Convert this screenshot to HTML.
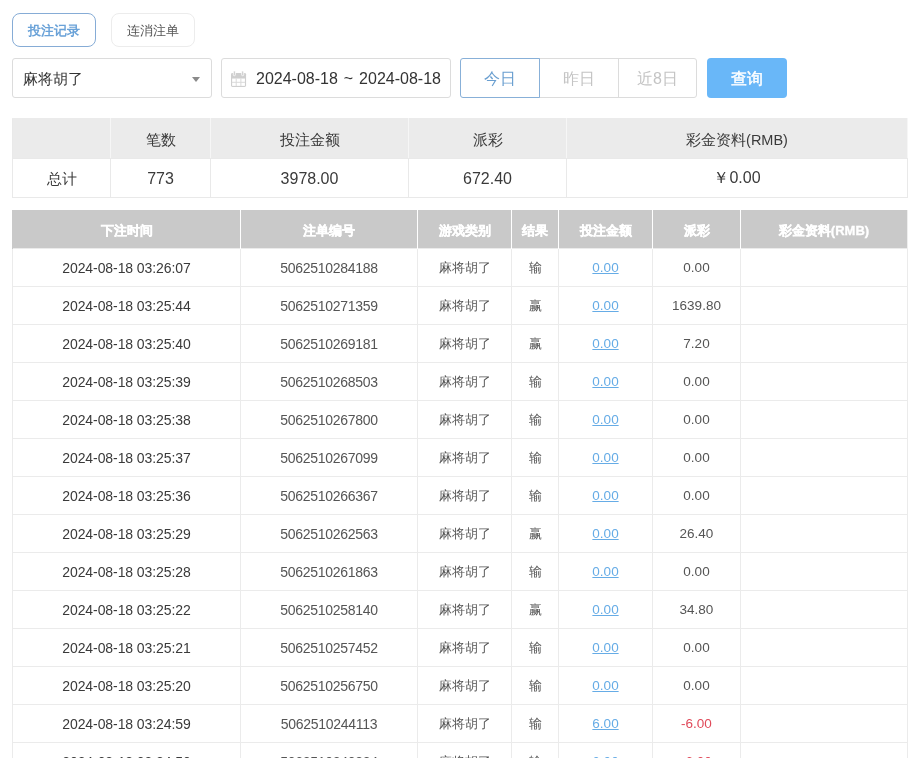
<!DOCTYPE html>
<html><head><meta charset="utf-8">
<style>
*{margin:0;padding:0;box-sizing:border-box}
html,body{width:908px;height:758px;overflow:hidden;background:#fff}
body{font-family:"Liberation Sans",sans-serif;color:#333;position:relative;will-change:transform}
.abs{position:absolute}
.tab{position:absolute;top:13px;height:34px;width:84px;border-radius:8px;font-size:13px;line-height:32px;padding-top:1px;text-align:center}
.tab1{left:12px;border:1px solid #86acd6;color:#6aa2d8;font-weight:bold}
.tab2{left:111px;border:1px solid #ececec;color:#555}
.sel{left:12px;top:58px;width:200px;height:40px;border:1px solid #dcdcdc;border-radius:3px}
.sel .t{position:absolute;left:10px;top:1px;line-height:38px;font-size:15px;color:#333}
.sel .arr{position:absolute;left:178.5px;top:18px;width:0;height:0;border-left:4.5px solid transparent;border-right:4.5px solid transparent;border-top:5px solid #8a8a8a}
.date{left:221px;top:58px;width:230px;height:40px;border:1px solid #dcdcdc;border-radius:3px}
.date .t{position:absolute;left:34px;top:1px;line-height:38px;font-size:16px;color:#333;white-space:nowrap;word-spacing:1.5px}
.date svg{position:absolute;left:9px;top:12px}
.grp{left:460px;top:58px;width:237px;height:40px}
.grp div{position:absolute;top:0;height:40px;line-height:38px;padding-top:1px;text-align:center;font-size:16px;color:#c4c4c4;border:1px solid #dcdcdc}
.q{left:707px;top:58px;width:80px;height:40px;background:#69b7f8;border-radius:4px;color:#fff;font-size:16px;line-height:40px;padding-top:1px;text-align:center;font-weight:normal;-webkit-text-stroke:0.45px #fff}
table{border-collapse:collapse;position:absolute;left:12px;table-layout:fixed}
.sum{top:118px;width:896px}
.sum td{border:1px solid #e9e9e9;text-align:center;font-size:16px;height:39px;color:#3a3a3a;padding-top:1px}
.sum td.zj{font-size:14.5px;padding-top:2px}
.sum tr.h td{height:40px;padding-top:3px;font-size:14.5px}
.sum tr.h td{background:#ebebeb;border-left-color:#f6f6f6;border-right-color:#f6f6f6;border-top-color:#ebebeb}
.sum tr.h td:first-child{border-left-color:#e9e9e9}
.main{top:210px;width:896px}
.main th{background:#c9c9c9;color:#fff;font-size:13px;font-weight:bold;-webkit-text-stroke:0.35px #fff;padding-top:5px;height:38px;border-left:1px solid #fff;border-right:1px solid #fff}
.main th:first-child{border-left:1px solid #c9c9c9}
.main th:last-child{border-right:1px solid #eeeeee}
.main td{border:1px solid #ebebeb;text-align:center;font-size:13.5px;height:38px;color:#555;padding-top:2px}
.main td:first-child{font-size:14px;color:#3a3a3a;letter-spacing:-0.08px}
.main td:nth-child(2){font-size:14px;letter-spacing:-0.3px}
.main td:nth-child(3),.main td:nth-child(4){font-size:13px}
.main td:nth-child(5),.main td:nth-child(6){padding-top:0}
.main td a{color:#66ace6;text-decoration:underline}
.main td.neg{color:#e04a5a}
</style></head><body>
<div class="tab tab1">投注记录</div>
<div class="tab tab2">连消注单</div>
<div class="abs sel"><span class="t">麻将胡了</span><i class="arr"></i></div>
<div class="abs date"><svg width="16" height="16" viewBox="0 0 17 17"><rect x="0" y="2" width="16" height="15" rx="1.5" fill="#cfcfcf"/><rect x="1.2" y="8" width="13.6" height="7.8" fill="#fff"/><rect x="5" y="8" width="1" height="8" fill="#d8d8d8"/><rect x="10" y="8" width="1" height="8" fill="#d8d8d8"/><rect x="1" y="11.5" width="14" height="1" fill="#d8d8d8"/><rect x="2.5" y="0" width="2.2" height="5" rx="1" fill="#cfcfcf" stroke="#fff" stroke-width="0.8"/><rect x="11.3" y="0" width="2.2" height="5" rx="1" fill="#cfcfcf" stroke="#fff" stroke-width="0.8"/></svg><span class="t">2024-08-18 ~ 2024-08-18</span></div>
<div class="abs grp">
<div style="left:0;width:80px;border-color:#88b0d8;color:#6a9fd0;border-radius:3px 0 0 3px;z-index:2">今日</div>
<div style="left:79px;width:80px">昨日</div>
<div style="left:158px;width:79px;border-radius:0 3px 3px 0">近8日</div>
</div>
<div class="abs q">查询</div>

<table class="sum">
<colgroup><col style="width:98px"><col style="width:100px"><col style="width:198px"><col style="width:158px"><col></colgroup>
<tr class="h"><td></td><td>笔数</td><td>投注金额</td><td>派彩</td><td>彩金资料(RMB)</td></tr>
<tr><td class="zj">总计</td><td>773</td><td>3978.00</td><td>672.40</td><td>￥0.00</td></tr>
</table>

<table class="main">
<colgroup><col style="width:228px"><col style="width:177px"><col style="width:94px"><col style="width:47px"><col style="width:94px"><col style="width:88px"><col></colgroup>
<tr><th>下注时间</th><th>注单编号</th><th>游戏类别</th><th>结果</th><th>投注金额</th><th>派彩</th><th>彩金资料(RMB)</th></tr>
<tr><td>2024-08-18 03:26:07</td><td>5062510284188</td><td>麻将胡了</td><td>输</td><td><a>0.00</a></td><td>0.00</td><td></td></tr>
<tr><td>2024-08-18 03:25:44</td><td>5062510271359</td><td>麻将胡了</td><td>赢</td><td><a>0.00</a></td><td>1639.80</td><td></td></tr>
<tr><td>2024-08-18 03:25:40</td><td>5062510269181</td><td>麻将胡了</td><td>赢</td><td><a>0.00</a></td><td>7.20</td><td></td></tr>
<tr><td>2024-08-18 03:25:39</td><td>5062510268503</td><td>麻将胡了</td><td>输</td><td><a>0.00</a></td><td>0.00</td><td></td></tr>
<tr><td>2024-08-18 03:25:38</td><td>5062510267800</td><td>麻将胡了</td><td>输</td><td><a>0.00</a></td><td>0.00</td><td></td></tr>
<tr><td>2024-08-18 03:25:37</td><td>5062510267099</td><td>麻将胡了</td><td>输</td><td><a>0.00</a></td><td>0.00</td><td></td></tr>
<tr><td>2024-08-18 03:25:36</td><td>5062510266367</td><td>麻将胡了</td><td>输</td><td><a>0.00</a></td><td>0.00</td><td></td></tr>
<tr><td>2024-08-18 03:25:29</td><td>5062510262563</td><td>麻将胡了</td><td>赢</td><td><a>0.00</a></td><td>26.40</td><td></td></tr>
<tr><td>2024-08-18 03:25:28</td><td>5062510261863</td><td>麻将胡了</td><td>输</td><td><a>0.00</a></td><td>0.00</td><td></td></tr>
<tr><td>2024-08-18 03:25:22</td><td>5062510258140</td><td>麻将胡了</td><td>赢</td><td><a>0.00</a></td><td>34.80</td><td></td></tr>
<tr><td>2024-08-18 03:25:21</td><td>5062510257452</td><td>麻将胡了</td><td>输</td><td><a>0.00</a></td><td>0.00</td><td></td></tr>
<tr><td>2024-08-18 03:25:20</td><td>5062510256750</td><td>麻将胡了</td><td>输</td><td><a>0.00</a></td><td>0.00</td><td></td></tr>
<tr><td>2024-08-18 03:24:59</td><td>5062510244113</td><td>麻将胡了</td><td>输</td><td><a>6.00</a></td><td class="neg">-6.00</td><td></td></tr>
<tr><td>2024-08-18 03:24:50</td><td>5062510240334</td><td>麻将胡了</td><td>输</td><td><a>6.00</a></td><td class="neg">-6.00</td><td></td></tr>
</table>
</body></html>
